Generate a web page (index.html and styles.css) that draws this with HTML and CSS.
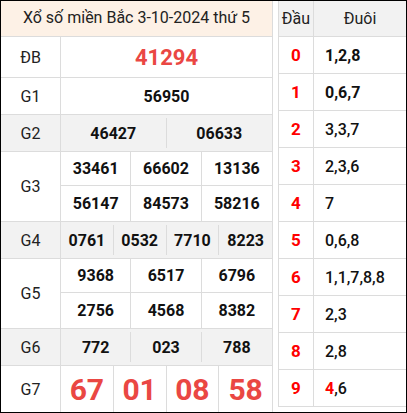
FILE: index.html
```html
<!DOCTYPE html>
<html>
<head>
<meta charset="utf-8">
<link rel="stylesheet" href="styles.css">
</head>
<body>
<div class="frame">
  <div class="kq">
    <div class="kq-head">Xổ số miền Bắc 3-10-2024 thứ 5</div>
    <div class="row r-db">
      <div class="lbl">ĐB</div>
      <div class="nums c1"><span class="db">41294</span></div>
    </div>
    <div class="row r-1">
      <div class="lbl">G1</div>
      <div class="nums c1"><span>56950</span></div>
    </div>
    <div class="row r-1 alt">
      <div class="lbl">G2</div>
      <div class="nums c2"><span>46427</span><span>06633</span></div>
    </div>
    <div class="row r-2">
      <div class="lbl">G3</div>
      <div class="nums c3 two"><span>33461</span><span>66602</span><span>13136</span><span>56147</span><span>84573</span><span>58216</span></div>
    </div>
    <div class="row r-1 alt">
      <div class="lbl">G4</div>
      <div class="nums c4"><span>0761</span><span>0532</span><span>7710</span><span>8223</span></div>
    </div>
    <div class="row r-2">
      <div class="lbl">G5</div>
      <div class="nums c3 two"><span>9368</span><span>6517</span><span>6796</span><span>2756</span><span>4568</span><span>8382</span></div>
    </div>
    <div class="row r-1 alt">
      <div class="lbl">G6</div>
      <div class="nums c3"><span>772</span><span>023</span><span>788</span></div>
    </div>
    <div class="row r-7 last">
      <div class="lbl">G7</div>
      <div class="nums c4 big"><span>67</span><span>01</span><span>08</span><span>58</span></div>
    </div>
  </div>
  <div class="lt">
    <div class="lt-row lt-head"><div class="dau">Đầu</div><div class="duoi">Đuôi</div></div>
    <div class="lt-row"><div class="dau">0</div><div class="duoi b">1,2,8</div></div>
    <div class="lt-row"><div class="dau">1</div><div class="duoi b">0,6,7</div></div>
    <div class="lt-row"><div class="dau">2</div><div class="duoi">3,3,7</div></div>
    <div class="lt-row"><div class="dau">3</div><div class="duoi">2,3,6</div></div>
    <div class="lt-row"><div class="dau">4</div><div class="duoi">7</div></div>
    <div class="lt-row"><div class="dau">5</div><div class="duoi">0,6,8</div></div>
    <div class="lt-row"><div class="dau">6</div><div class="duoi">1,1,7,8,8</div></div>
    <div class="lt-row"><div class="dau">7</div><div class="duoi">2,3</div></div>
    <div class="lt-row"><div class="dau">8</div><div class="duoi">2,8</div></div>
    <div class="lt-row"><div class="dau">9</div><div class="duoi"><span class="red">4</span>,6</div></div>
  </div>
</div>
</body>
</html>
```
FILE: styles.css
```css
* { box-sizing: border-box; }
html, body { margin: 0; padding: 0; background: #fff; }
body { font-family: Roboto, "Noto Sans", Arial, sans-serif; color: #111; }

.frame {
  width: 407px;
  height: 413px;
  border: 1px solid #000;
  display: flex;
  align-items: flex-start;
  gap: 5px;
  overflow: hidden;
}

.kq {
  width: 272px;
  flex: none;
  border-right: 1px solid #dcdcdc;
  height: 411px;
}
.kq-head {
  height: 36px;
  background: #fdf1e6;
  border-bottom: 1px solid #dcdcdc;
  font-size: 16px;
  color: #222;
  display: flex;
  align-items: center;
  justify-content: center;
  padding-bottom: 2px;
}
.row {
  display: flex;
  border-bottom: 1px solid #dcdcdc;
}
.row.alt { background: #f2f2f2; }
.r-db { height: 41px; }
.r-1 { height: 37px; }
.r-2 { height: 70px; }
.r-7 { height: 46px; border-bottom: none; }

.lbl {
  width: 60px;
  flex: none;
  border-right: 1px solid #dcdcdc;
  display: flex;
  align-items: center;
  justify-content: center;
  font-size: 16px;
  color: #222;
}
.nums {
  flex: 1;
  display: grid;
  font-weight: 700;
  font-size: 16px;
  color: #111;
}
.nums span {
  display: flex;
  align-items: center;
  justify-content: center;
  border-right: 1px solid #dcdcdc;
}
.c1 { grid-template-columns: 1fr; }
.c2 { grid-template-columns: 1fr 1fr; }
.c3 { grid-template-columns: 1fr 1fr 1fr; }
.c4 { grid-template-columns: 1fr 1fr 1fr 1fr; }
.c1 span { border-right: none; }
.c2 span:nth-child(2n), .c3 span:nth-child(3n), .c4 span:nth-child(4n) { border-right: none; }
.two { grid-template-rows: 34px 35px; }
.two span:nth-child(-n+3) { border-bottom: 1px solid #dcdcdc; }

.row.alt .nums span { margin: 3px 0; }
.r-7 .nums span { margin: 0; }

.db { color: #ea4743; font-size: 22px; }
.big span { color: #ea4743; font-size: 30px; }

.lt {
  width: 128px;
  flex: none;
  border-left: 1px solid #dcdcdc;
  height: 406px;
}
.lt-row {
  display: flex;
  height: 37px;
  border-bottom: 1px solid #dcdcdc;
}
.lt-head { height: 36px; background: #f2f2f2; }
.lt-head .dau, .lt-head .duoi { font-weight: 400; color: #222; font-size: 16px; }
.lt-head .duoi { justify-content: center; padding-left: 0; }
.dau {
  width: 35px;
  flex: none;
  border-right: 1px solid #dcdcdc;
  display: flex;
  align-items: center;
  justify-content: center;
  color: #f00;
  font-weight: 700;
  font-size: 17px;
}
.duoi {
  flex: 1;
  display: flex;
  align-items: center;
  padding-left: 11px;
  font-size: 16px;
  font-weight: 500;
  color: #111;
}
.duoi.b { font-weight: 700; }
.red { color: #f00; font-weight: 700; }
```
